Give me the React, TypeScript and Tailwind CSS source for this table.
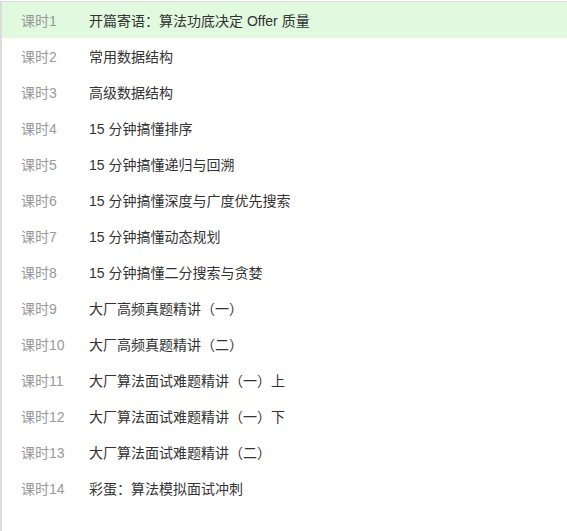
const lessons = [
  '开篇寄语：算法功底决定 Offer 质量',
  '常用数据结构',
  '高级数据结构',
  '15 分钟搞懂排序',
  '15 分钟搞懂递归与回溯',
  '15 分钟搞懂深度与广度优先搜索',
  '15 分钟搞懂动态规划',
  '15 分钟搞懂二分搜索与贪婪',
  '大厂高频真题精讲（一）',
  '大厂高频真题精讲（二）',
  '大厂算法面试难题精讲（一）上',
  '大厂算法面试难题精讲（一）下',
  '大厂算法面试难题精讲（二）',
  '彩蛋：算法模拟面试冲刺',
];

export default function App() {
  return (
    <div
      className="w-[567px] h-[531px] bg-white overflow-hidden"
      style={{ fontFamily: '"Liberation Sans", "Noto Sans CJK SC", sans-serif' }}
    >
      <div className="mt-px h-[530px] border-t border-l-2 border-[#dcdcdc]">
        <ul>
          {lessons.map((title, i) => (
            <li
              key={i}
              className={`flex items-center h-9 pl-[19px] pt-[2px] text-[14px] ${
                i === 0 ? 'bg-[#e1f9df]' : ''
              }`}
            >
              <span className="w-[68px] shrink-0 text-[#999]">课时{i + 1}</span>
              <span className="text-[#333]">{title}</span>
            </li>
          ))}
        </ul>
      </div>
    </div>
  );
}
